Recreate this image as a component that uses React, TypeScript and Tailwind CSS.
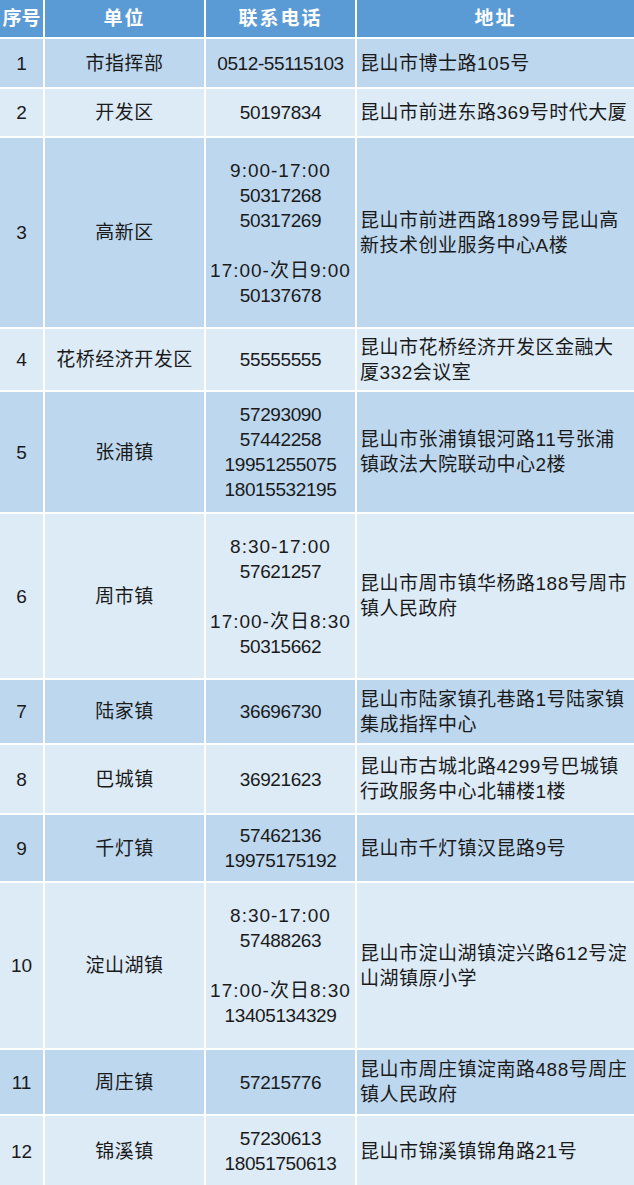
type Row = { no: string; unit: string; phones: string[]; addr: string[]; h: string };

const ROWS: Row[] = [
  { no: "1", unit: "市指挥部", phones: ["0512-55115103"], addr: ["昆山市博士路105号"], h: "h-[48px]" },
  { no: "2", unit: "开发区", phones: ["50197834"], addr: ["昆山市前进东路369号时代大厦"], h: "h-[47px]" },
  {
    no: "3",
    unit: "高新区",
    phones: ["9:00-17:00", "50317268", "50317269", "", "17:00-次日9:00", "50137678"],
    addr: ["昆山市前进西路1899号昆山高", "新技术创业服务中心A楼"],
    h: "h-[189px]",
  },
  { no: "4", unit: "花桥经济开发区", phones: ["55555555"], addr: ["昆山市花桥经济开发区金融大", "厦332会议室"], h: "h-[61px]" },
  {
    no: "5",
    unit: "张浦镇",
    phones: ["57293090", "57442258", "19951255075", "18015532195"],
    addr: ["昆山市张浦镇银河路11号张浦", "镇政法大院联动中心2楼"],
    h: "h-[120px]",
  },
  {
    no: "6",
    unit: "周市镇",
    phones: ["8:30-17:00", "57621257", "", "17:00-次日8:30", "50315662"],
    addr: ["昆山市周市镇华杨路188号周市", "镇人民政府"],
    h: "h-[164px]",
  },
  { no: "7", unit: "陆家镇", phones: ["36696730"], addr: ["昆山市陆家镇孔巷路1号陆家镇", "集成指挥中心"], h: "h-[63px]" },
  { no: "8", unit: "巴城镇", phones: ["36921623"], addr: ["昆山市古城北路4299号巴城镇", "行政服务中心北辅楼1楼"], h: "h-[68px]" },
  { no: "9", unit: "千灯镇", phones: ["57462136", "19975175192"], addr: ["昆山市千灯镇汉昆路9号"], h: "h-[66px]" },
  {
    no: "10",
    unit: "淀山湖镇",
    phones: ["8:30-17:00", "57488263", "", "17:00-次日8:30", "13405134329"],
    addr: ["昆山市淀山湖镇淀兴路612号淀", "山湖镇原小学"],
    h: "h-[165px]",
  },
  { no: "11", unit: "周庄镇", phones: ["57215776"], addr: ["昆山市周庄镇淀南路488号周庄", "镇人民政府"], h: "h-[64px]" },
  { no: "12", unit: "锦溪镇", phones: ["57230613", "18051750613"], addr: ["昆山市锦溪镇锦角路21号"], h: "h-[70px]" },
];

const COLS = "grid grid-cols-[43px_159px_149px_1fr] gap-x-[2px]";

export default function App() {
  return (
    <div
      className="flex h-[1185px] w-[634px] flex-col gap-y-[2px] overflow-hidden bg-white text-[19px] leading-[25px] text-[#1a1a1a]"
      style={{ fontFamily: '"Liberation Sans", "Noto Sans CJK SC", sans-serif' }}
    >
      <div className={`${COLS} h-[37px] shrink-0 font-bold text-white`}>
        <Cell className="bg-[#5b9bd5] justify-center">序号</Cell>
        <Cell className="bg-[#5b9bd5] justify-center tracking-[2px]">单位</Cell>
        <Cell className="bg-[#5b9bd5] justify-center tracking-[2px]">联系电话</Cell>
        <Cell className="bg-[#5b9bd5] justify-center tracking-[2px]">地址</Cell>
      </div>

      {ROWS.map((r, i) => {
        const bg = i % 2 === 0 ? "bg-[#bdd7ee]" : "bg-[#ddebf7]";
        return (
          <div key={r.no} className={`${COLS} ${r.h} shrink-0`}>
            <Cell className={`${bg} justify-center`}>{r.no}</Cell>
            <Cell className={`${bg} justify-center tracking-[0.5px]`}>{r.unit}</Cell>
            <Cell className={`${bg} justify-center`}>
              <div className="flex flex-col items-center">
                {r.phones.map((p, j) => (
                  <span
                    key={j}
                    className={`h-[25px] whitespace-nowrap ${p.includes(":") ? "tracking-[1px]" : "tracking-[-0.4px]"}`}
                  >
                    {p}
                  </span>
                ))}
              </div>
            </Cell>
            <Cell className={`${bg} justify-start pl-[3px] tracking-[0.5px]`}>
              <div className="flex flex-col">
                {r.addr.map((a, j) => (
                  <span key={j} className="whitespace-nowrap">{a}</span>
                ))}
              </div>
            </Cell>
          </div>
        );
      })}
    </div>
  );
}

function Cell({ className, children }: { className?: string; children: React.ReactNode }) {
  return <div className={`flex items-center whitespace-nowrap ${className ?? ""}`}>{children}</div>;
}
